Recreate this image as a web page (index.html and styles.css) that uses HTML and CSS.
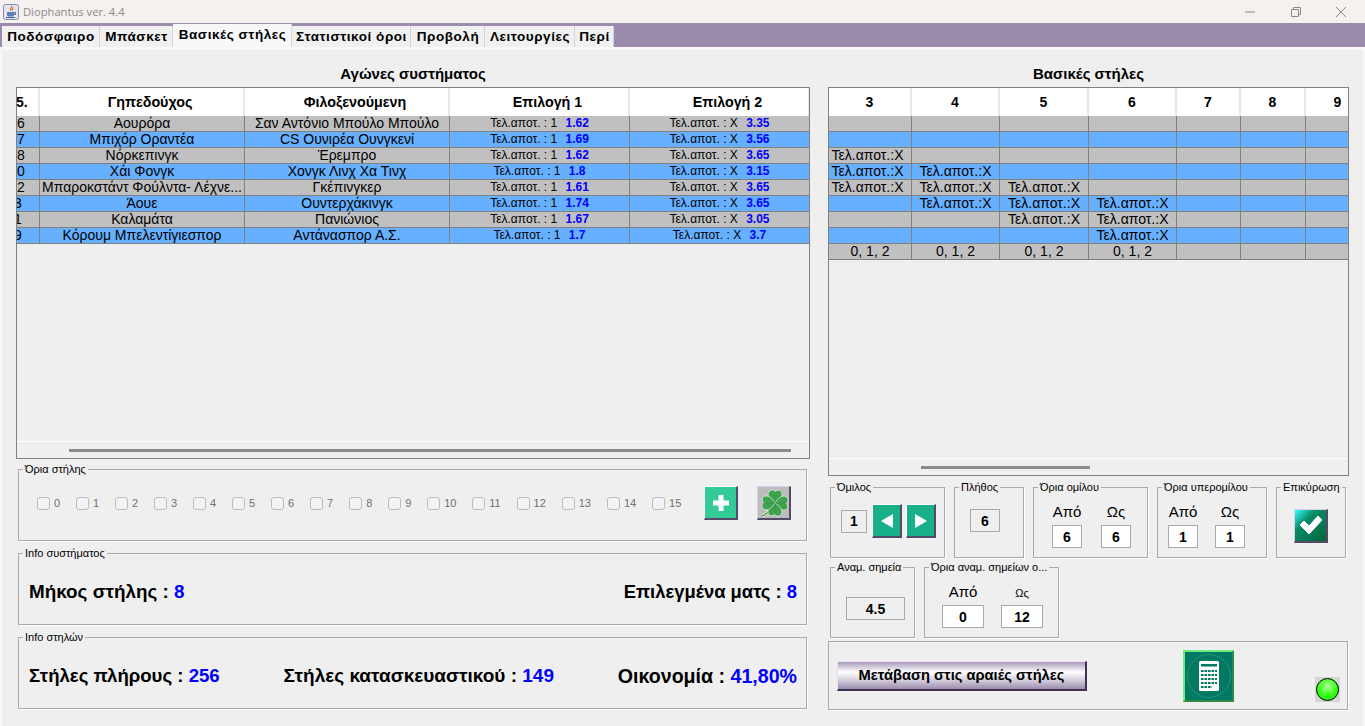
FILE: index.html
```html
<!DOCTYPE html>
<html lang="el">
<head>
    <meta charset="UTF-8" />
    <title>Diophantus ver. 4.4</title>
    <link rel="stylesheet" href="styles.css">
</head>
<body>
    <header class="titlebar">
        <svg class="app-icon" width="16" height="16" viewBox="0 0 16 16">
            <rect x="0.5" y="0.5" width="15" height="15" rx="2" fill="#e4e4ee" stroke="#7d8fb0"/>
            <path d="M8.500 2c1 1.500-2 2.500-1 4.500M10 3.500c.5 1-1.500 1.500-.8 3" fill="none" stroke="#d8652a" stroke-width="1.200"/>
            <path d="M4 8h7v2.500c0 1.500-1 2-2 2H6c-1 0-2-.5-2-2z" fill="#5a7fb5"/>
            <path d="M11 8.500h1.500v2H11M3 13.500h9" fill="none" stroke="#3f5f95"/>
        </svg>
        <span class="app-title">Diophantus ver. 4.4</span>
        <div class="win-controls">
            <span class="win-btn">
                <svg width="12" height="12" viewBox="0 0 12 12"><path d="M1 6h10" stroke="#8a8a8a"/></svg>
            </span>
            <span class="win-btn">
                <svg width="12" height="12" viewBox="0 0 12 12"><path d="M1.500 3.500h7v7h-7zM3.500 3.500v-2h7v7h-2" fill="none" stroke="#8a8a8a"/></svg>
            </span>
            <span class="win-btn">
                <svg width="12" height="12" viewBox="0 0 12 12"><path d="M1 1l10 10M11 1L1 11" stroke="#8a8a8a"/></svg>
            </span>
        </div>
    </header>

    <nav class="tabbar">
        <span class="tab tab-1">Ποδόσφαιρο</span>
        <span class="tab tab-2">Μπάσκετ</span>
        <span class="tab tab-3 active">Βασικές στήλες</span>
        <span class="tab tab-4">Στατιστικοί όροι</span>
        <span class="tab tab-5">Προβολή</span>
        <span class="tab tab-6">Λειτουργίες</span>
        <span class="tab tab-7">Περί</span>
    </nav>

    <main class="panel">
        <section class="col-left">
            <h2 class="pane-title">Αγώνες συστήματος</h2>
            <div class="grid-wrap games-wrap">
                <table class="grid games">
                    <colgroup>
                        <col class="c-no"><col class="c-team"><col class="c-team"><col class="c-pick"><col class="c-pick">
                    </colgroup>
                    <thead>
                        <tr><th class="no">5.</th><th>Γηπεδούχος</th><th>Φιλοξενούμενη</th><th>Επιλογή 1</th><th>Επιλογή 2</th></tr>
                    </thead>
                    <tbody>
                        <tr class="gray"><td class="no">6</td><td>Αουρόρα</td><td>Σαν Αντόνιο Μπούλο Μπούλο</td><td class="pick">Τελ.αποτ. : 1 <b>1.62</b></td><td class="pick">Τελ.αποτ. : Χ <b>3.35</b></td></tr>
                        <tr class="blue"><td class="no">7</td><td>Μπιχόρ Οραντέα</td><td>CS Ουνιρέα Ουνγκενί</td><td class="pick">Τελ.αποτ. : 1 <b>1.69</b></td><td class="pick">Τελ.αποτ. : Χ <b>3.56</b></td></tr>
                        <tr class="gray"><td class="no">8</td><td>Νόρκεπινγκ</td><td>Έρεμπρο</td><td class="pick">Τελ.αποτ. : 1 <b>1.62</b></td><td class="pick">Τελ.αποτ. : Χ <b>3.65</b></td></tr>
                        <tr class="blue"><td class="no">0</td><td>Χάι Φονγκ</td><td>Χονγκ Λινχ Χα Τινχ</td><td class="pick">Τελ.αποτ. : 1 <b>1.8</b></td><td class="pick">Τελ.αποτ. : Χ <b>3.15</b></td></tr>
                        <tr class="gray"><td class="no">2</td><td>Μπαροκστάντ Φούλντα- Λέχνε...</td><td>Γκέπινγκερ</td><td class="pick">Τελ.αποτ. : 1 <b>1.61</b></td><td class="pick">Τελ.αποτ. : Χ <b>3.65</b></td></tr>
                        <tr class="blue"><td class="no cut">3</td><td>Άουε</td><td>Ουντερχάκινγκ</td><td class="pick">Τελ.αποτ. : 1 <b>1.74</b></td><td class="pick">Τελ.αποτ. : Χ <b>3.65</b></td></tr>
                        <tr class="gray"><td class="no cut">1</td><td>Καλαμάτα</td><td>Πανιώνιος</td><td class="pick">Τελ.αποτ. : 1 <b>1.67</b></td><td class="pick">Τελ.αποτ. : Χ <b>3.05</b></td></tr>
                        <tr class="blue"><td class="no cut">9</td><td>Κόρουμ Μπελεντίγιεσπορ</td><td>Αντάνασπορ Α.Σ.</td><td class="pick">Τελ.αποτ. : 1 <b>1.7</b></td><td class="pick">Τελ.αποτ. : Χ <b>3.7</b></td></tr>
                    </tbody>
                </table>
                <div class="hscroll"><div class="thumb games-thumb"></div></div>
            </div>

            <fieldset class="box limits">
                <legend>Όρια στήλης</legend>
                <div class="box-body">
                    <label class="chk"><input type="checkbox" disabled>0</label>
                    <label class="chk"><input type="checkbox" disabled>1</label>
                    <label class="chk"><input type="checkbox" disabled>2</label>
                    <label class="chk"><input type="checkbox" disabled>3</label>
                    <label class="chk"><input type="checkbox" disabled>4</label>
                    <label class="chk"><input type="checkbox" disabled>5</label>
                    <label class="chk"><input type="checkbox" disabled>6</label>
                    <label class="chk"><input type="checkbox" disabled>7</label>
                    <label class="chk"><input type="checkbox" disabled>8</label>
                    <label class="chk"><input type="checkbox" disabled>9</label>
                    <label class="chk"><input type="checkbox" disabled>10</label>
                    <label class="chk"><input type="checkbox" disabled>11</label>
                    <label class="chk"><input type="checkbox" disabled>12</label>
                    <label class="chk"><input type="checkbox" disabled>13</label>
                    <label class="chk"><input type="checkbox" disabled>14</label>
                    <label class="chk"><input type="checkbox" disabled>15</label>
                    <button class="icon-btn plus-btn" type="button" aria-label="Προσθήκη">
                        <svg width="20" height="20" viewBox="0 0 20 20"><path d="M7.500 2h5v5.500H18v5h-5.500V18h-5v-5.500H2v-5h5.500z" fill="#fff"/></svg>
                    </button>
                    <button class="icon-btn clover-btn" type="button" aria-label="Τριφύλλι">
                        <svg width="30" height="30" viewBox="0 0 30 30">
                            <path d="M3 28c3-1 7-4 11-11" fill="none" stroke="#f2f2f2" stroke-width="3"/>
                            <path d="M3 28c3-1 7-4 11-11" fill="none" stroke="#3f9f4a" stroke-width="1.500"/>
                            <g fill="#3fa34d" stroke="#e8f2e8" stroke-width="0.700">
                                <path d="M16 15C11 12 8 8 9.500 4.500 11 1 15 1.500 16.500 3.500 18 1.500 23 1.500 23 6c0 4-3 7-7 9z"/>
                                <path d="M16 15c3-5 7-8 10.500-6.500 3.500 1.500 3 5.500 1 7 2 1.500 2 6.500-2.500 6.500-4 0-7-3-9-7z"/>
                                <path d="M16 15c5 3 8 7 6.500 10.500-1.500 3.500-5.500 3-7 1-1.500 2-6.500 2-6.500-2.500 0-4 3-7 7-9z"/>
                                <path d="M16 15c-3 5-7 8-10.500 6.500C2 20 2.500 16 4.500 14.500 2.500 13 2.500 8 7 8c4 0 7 3 9 7z"/>
                            </g>
                            <path d="M16 6v18M7 15h18" stroke="#2f8a3c" stroke-width="0.500"/>
                        </svg>
                    </button>
                </div>
            </fieldset>

            <fieldset class="box info">
                <legend>Info συστήματος</legend>
                <div class="box-body">
                    <p class="stat stat-md">Μήκος στήλης : <b>8</b></p>
                    <p class="stat stat-sm">Επιλεγμένα ματς : <b>8</b></p>
                </div>
            </fieldset>

            <fieldset class="box info">
                <legend>Info στηλών</legend>
                <div class="box-body">
                    <p class="stat">Στήλες πλήρους : <b>256</b></p>
                    <p class="stat stat-lg">Στήλες κατασκευαστικού : <b>149</b></p>
                    <p class="stat stat-xl">Οικονομία : <b>41,80%</b></p>
                </div>
            </fieldset>
        </section>

        <section class="col-right">
            <h2 class="pane-title">Βασικές στήλες</h2>
            <div class="grid-wrap columns-wrap">
                <table class="grid cols">
                    <colgroup>
                        <col class="k-3"><col class="k-4"><col class="k-5"><col class="k-6"><col class="k-7"><col class="k-8"><col class="k-9">
                    </colgroup>
                    <thead>
                        <tr><th>3</th><th>4</th><th>5</th><th>6</th><th>7</th><th>8</th><th>9</th></tr>
                    </thead>
                    <tbody>
                        <tr class="gray"><td></td><td></td><td></td><td></td><td></td><td></td><td></td></tr>
                        <tr class="blue"><td></td><td></td><td></td><td></td><td></td><td></td><td></td></tr>
                        <tr class="gray"><td class="first">Τελ.αποτ.:Χ</td><td></td><td></td><td></td><td></td><td></td><td></td></tr>
                        <tr class="blue"><td class="first">Τελ.αποτ.:Χ</td><td>Τελ.αποτ.:Χ</td><td></td><td></td><td></td><td></td><td></td></tr>
                        <tr class="gray"><td class="first">Τελ.αποτ.:Χ</td><td>Τελ.αποτ.:Χ</td><td>Τελ.αποτ.:Χ</td><td></td><td></td><td></td><td></td></tr>
                        <tr class="blue"><td></td><td>Τελ.αποτ.:Χ</td><td>Τελ.αποτ.:Χ</td><td>Τελ.αποτ.:Χ</td><td></td><td></td><td></td></tr>
                        <tr class="gray"><td></td><td></td><td>Τελ.αποτ.:Χ</td><td>Τελ.αποτ.:Χ</td><td></td><td></td><td></td></tr>
                        <tr class="blue"><td></td><td></td><td></td><td>Τελ.αποτ.:Χ</td><td></td><td></td><td></td></tr>
                        <tr class="gray"><td>0, 1, 2</td><td>0, 1, 2</td><td>0, 1, 2</td><td>0, 1, 2</td><td></td><td></td><td></td></tr>
                    </tbody>
                </table>
                <div class="hscroll"><div class="thumb cols-thumb"></div></div>
            </div>

            <div class="box-row row-one">
                <fieldset class="box group-box">
                    <legend>Όμιλος</legend>
                    <div class="box-body">
                        <output class="val plain">1</output>
                        <button class="icon-btn nav-btn" type="button" aria-label="Προηγούμενο">
                            <svg width="16" height="20" viewBox="0 0 16 20"><path d="M14 3v14L2 10z" fill="#fff"/></svg>
                        </button>
                        <button class="icon-btn nav-btn" type="button" aria-label="Επόμενο">
                            <svg width="16" height="20" viewBox="0 0 16 20"><path d="M2 3v14l12-7z" fill="#fff"/></svg>
                        </button>
                    </div>
                </fieldset>
                <fieldset class="box count-box">
                    <legend>Πλήθος</legend>
                    <div class="box-body">
                        <output class="val plain">6</output>
                    </div>
                </fieldset>
                <fieldset class="box group-range">
                    <legend>Όρια ομίλου</legend>
                    <div class="box-body">
                        <div class="field"><span>Από</span><output class="val">6</output></div>
                        <div class="field"><span>Ως</span><output class="val">6</output></div>
                    </div>
                </fieldset>
                <fieldset class="box sub-range">
                    <legend>Όρια υπερομίλου</legend>
                    <div class="box-body">
                        <div class="field"><span>Από</span><output class="val">1</output></div>
                        <div class="field"><span>Ως</span><output class="val">1</output></div>
                    </div>
                </fieldset>
                <fieldset class="box confirm-box">
                    <legend>Επικύρωση</legend>
                    <div class="box-body">
                        <button class="icon-btn check-btn" type="button" aria-label="Επικύρωση">
                            <svg width="26" height="22" viewBox="0 0 26 22"><path d="M2 11l4-4 5 5L20 2l4 4-13 14z" fill="#fff" stroke="#fff" stroke-linejoin="round"/></svg>
                        </button>
                    </div>
                </fieldset>
            </div>

            <div class="box-row row-two">
                <fieldset class="box points-box">
                    <legend>Αναμ. σημεία</legend>
                    <div class="box-body">
                        <output class="val plain">4.5</output>
                    </div>
                </fieldset>
                <fieldset class="box points-range">
                    <legend>Όρια αναμ. σημείων ο...</legend>
                    <div class="box-body">
                        <div class="field"><span>Από</span><output class="val">0</output></div>
                        <div class="field small-label"><span>Ως</span><output class="val">12</output></div>
                    </div>
                </fieldset>
            </div>

            <div class="action-panel">
                <button class="go-btn" type="button">Μετάβαση στις αραιές στήλες</button>
                <button class="calc-btn" type="button" aria-label="Υπολογισμός">
                    <svg width="46" height="46" viewBox="0 0 46 46">
                        <circle cx="23" cy="23" r="21.500" fill="none" stroke="#3f9a86" stroke-width="0.700"/>
                        <rect x="13" y="8" width="20" height="30" rx="1.500" fill="#fff"/>
                        <rect x="15" y="11" width="16" height="2.500" fill="#007a62"/>
                        <path d="M15 18h16M15 22h16M15 26h16M15 30h16M15 34h11" stroke="#007a62" stroke-width="2.200" stroke-dasharray="2.600 .9"/>
                    </svg>
                </button>
                <span class="led"><i></i></span>
            </div>
        </section>
    </main>
</body>
</html>
```

FILE: styles.css
```css
* {
    margin: 0;
    padding: 0;
    box-sizing: border-box;
    font-family: "Liberation Sans", Arial, sans-serif;
}
body {
    width: 1365px;
    height: 726px;
    overflow: hidden;
    background: #efefef;
    color: #000;
    display: flex;
    flex-direction: column;
}

/* window chrome */
.titlebar {
    height: 23px;
    background: #f6f1ef;
    display: flex;
    align-items: center;
    padding-left: 3px;
}
.app-icon {
    flex: none;
}
.app-title {
    margin-left: 4px;
    font-family: "Open Sans", sans-serif;
    font-size: 11.2px;
    color: #8b8b8b;
}
.win-controls {
    margin-left: auto;
    display: flex;
    padding-right: 1px;
}
.win-btn {
    width: 45.5px;
    height: 23px;
    display: flex;
    align-items: center;
    justify-content: center;
}
.tabbar {
    height: 24px;
    background: #9b8cad;
    display: flex;
    align-items: flex-end;
    padding-left: 2px;
}
.tab {
    height: 21px;
    padding-left: 1px;
    background: #f0f0f0;
    border-right: 1px solid #d5d0dc;
    font-size: 13.5px;
    font-weight: 700;
    letter-spacing: 0.55px;
    line-height: 22px;
    text-align: center;
    white-space: nowrap;
}
.tab.active {
    height: 23px;
    background: #f8f8f8;
}
.tab-1 { width: 98px; }
.tab-2 { width: 73px; }
.tab-3 { width: 119px; }
.tab-4 { width: 119px; }
.tab-5 { width: 74px; }
.tab-6 { width: 90px; }
.tab-7 { width: 39px; }

/* main panel */
.panel {
    flex: 1;
    min-height: 0;
    display: grid;
    grid-template-columns: 794px 521px;
    column-gap: 18px;
    padding: 16px 0 0 14px;
    border-top: 3px solid #f8f8f8;
    border-left: 2px solid #f8f8f8;
    border-right: 2px solid #f8f8f8;
}
.col-left,
.col-right {
    display: flex;
    flex-direction: column;
}
.pane-title {
    font-size: 15px;
    font-weight: 700;
    line-height: 16px;
    margin-bottom: 5px;
    text-align: center;
}

/* tables */
.grid-wrap {
    border: 1px solid #808080;
    display: flex;
    flex-direction: column;
    background: #efefef;
    overflow: hidden;
}
.games-wrap { height: 372px; }
.columns-wrap { height: 389px; }
.grid {
    flex: none;
    table-layout: fixed;
    border-collapse: separate;
    border-spacing: 0;
}
.games { width: 792px; }
.cols { width: 542px; }
.c-no { width: 23px; }
.c-team { width: 205px; }
.c-pick { width: 180px; }
.k-3 { width: 83px; }
.k-4 { width: 88px; }
.k-5 { width: 89px; }
.k-6 { width: 88px; }
.k-7 { width: 64px; }
.k-8 { width: 65px; }
.k-9 { width: 65px; }
.grid th {
    height: 28px;
    background: #fff;
    border-right: 2px solid #e8e8e8;
    font-size: 14px;
    font-weight: 700;
}
.games th {
    padding-left: 17px;
    font-size: 14.3px;
}
.games th.no {
    padding-left: 0;
    font-size: 14px;
    text-indent: -1px;
}
.grid td {
    height: 16px;
    padding: 0;
    border-right: 1px solid #808080;
    border-bottom: 1px solid #808080;
    font-size: 14px;
    line-height: 15px;
    text-align: center;
    white-space: nowrap;
    overflow: hidden;
}
.grid .no { text-align: left; }
.grid .cut { text-indent: -3px; }
.grid .first { padding-right: 5px; }
.gray td { background: #c0c0c0; }
.blue td { background: #66b0ff; }
.grid .pick {
    font-size: 12px;
}
.pick b {
    margin-left: 5px;
    color: #0000ff;
}
.hscroll {
    margin-top: auto;
    height: 17px;
    border-top: 1px solid #fff;
    padding-top: 7px;
}
.thumb {
    height: 3px;
    background: #8a8a8a;
}
.games-thumb {
    margin-left: 52px;
    width: 722px;
}
.cols-thumb {
    margin-left: 92px;
    width: 169px;
}

/* group boxes */
.box {
    min-width: 0;
    border: 1px solid #a9a9a9;
    box-shadow: 1px 1px 0 #fff;
}
.box legend {
    margin-left: 4px;
    padding: 0 2px;
    font-size: 11px;
    line-height: 14px;
    white-space: nowrap;
}
.box-body {
    display: flex;
    align-items: center;
    height: 64px;
}
.limits {
    margin: 3px 3px 0 2px;
}
.limits .box-body {
    gap: 15.9px;
    padding: 0 0 10px 18px;
}
.chk {
    display: flex;
    align-items: center;
    font-size: 11px;
    color: #707070;
}
.chk input {
    appearance: none;
    width: 13px;
    height: 13px;
    margin-right: 4px;
    background: #f3f3f3;
    border: 1px solid #bdbdbd;
    border-radius: 3px;
}
.icon-btn {
    display: flex;
    align-items: center;
    justify-content: center;
    border-style: solid;
    border-width: 1px 2px 2px 1px;
    border-color: #fff #554a66 #554a66 #fff;
}
.plus-btn {
    width: 34px;
    height: 34px;
    margin-left: 7px;
    background: #33cc99;
}
.clover-btn {
    width: 34px;
    height: 34px;
    margin-left: 3px;
    background: #bcbcbc;
    border-color: #d9d0ee #554a66 #554a66 #d9d0ee;
}
.info {
    margin: 5px 3px 0 2px;
}
.info .box-body {
    justify-content: space-between;
    padding: 0 9px 0 10px;
}
.stat {
    font-size: 18.6px;
    font-weight: 700;
}
.stat-sm { font-size: 18.4px; }
.stat-md { font-size: 18.85px; }
.stat-lg { font-size: 19px; }
.stat-xl { font-size: 19.6px; }
.stat b {
    color: #0000ff;
}

/* right hand controls */
.box-row {
    display: flex;
    gap: 9px;
    margin-left: 2px;
}
.row-one {
    margin-top: 4px;
}
.row-two {
    margin-top: 2px;
}
.box-row .box-body {
    height: 63px;
}
.val {
    display: flex;
    align-items: center;
    justify-content: center;
    width: 30px;
    height: 23px;
    background: #fff;
    border: 1px solid #a9a9a9;
    font-size: 14px;
    font-weight: 700;
}
.val.plain { background: #efefef; }
.group-box { width: 115px; }
.group-box .box-body {
    gap: 4px;
    padding: 0 0 9px 10px;
}
.group-box .val {
    width: 26px;
    margin-right: 1px;
}
.nav-btn {
    width: 30px;
    height: 34px;
    background: #17b088;
}
.count-box { width: 70px; }
.count-box .box-body {
    justify-content: center;
    padding: 0 8px 10px 0;
}
.group-range { width: 115px; }
.sub-range { width: 110px; }
.group-range .box-body,
.sub-range .box-body,
.points-range .box-body {
    align-items: flex-start;
    padding-top: 9px;
}
.group-range .box-body {
    gap: 19px;
    padding-left: 18px;
}
.sub-range .box-body {
    gap: 17px;
    padding-left: 10px;
}
.field {
    display: flex;
    flex-direction: column;
    align-items: center;
    gap: 4px;
}
.field span {
    font-size: 15px;
    line-height: 18px;
}
.confirm-box { width: 70px; }
.confirm-box .box-body {
    justify-content: center;
}
.check-btn {
    width: 34px;
    height: 34px;
    background: linear-gradient(135deg, #33ffff 0, #0a8a66 35%, #00663c 100%);
    border-color: #d9d0ee #554a66 #554a66 #d9d0ee;
}
.points-box { width: 85px; }
.points-box .box-body {
    padding: 6px 0 0 15px;
}
.points-box .val {
    width: 59px;
}
.points-range { width: 135px; }
.points-range .box-body {
    gap: 17px;
    padding-left: 17px;
}
.points-range .val {
    width: 42px;
}
.small-label span {
    padding-top: 3px;
    font-size: 11px;
    line-height: 15px;
}
.action-panel {
    height: 69px;
    margin-top: 3px;
    margin-right: 1px;
    border: 1px solid #a9a9a9;
    box-shadow: 1px 1px 0 #fff;
    display: flex;
    align-items: center;
    padding: 0 0 0 8px;
}
.go-btn {
    width: 250px;
    height: 30px;
    background: linear-gradient(#a99bb9 0, #fff 38%, #cfc8d8 70%, #9b8cad 100%);
    border-style: solid;
    border-width: 1px 2px 2px 1px;
    border-color: #e8e0f2 #3d3350 #3d3350 #e8e0f2;
    font-size: 14.7px;
    font-weight: 700;
}
.calc-btn {
    width: 51px;
    height: 52px;
    margin-left: 96px;
    display: flex;
    align-items: center;
    justify-content: center;
    background: #007a62;
    border-style: solid;
    border-width: 2px;
    border-color: #6bee7e #338844 #338844 #6bee7e;
}
.led {
    width: 25px;
    height: 25px;
    margin-left: 81px;
    align-self: flex-end;
    margin-bottom: 7px;
    background: #d6d6d6;
    display: flex;
    align-items: center;
    justify-content: center;
}
.led i {
    display: block;
    width: 23px;
    height: 23px;
    border-radius: 50%;
    border: 1px solid #000;
    background: radial-gradient(circle at 50% 35%, #aaff99 0, #33ff11 55%, #22dd00 100%);
}
```
